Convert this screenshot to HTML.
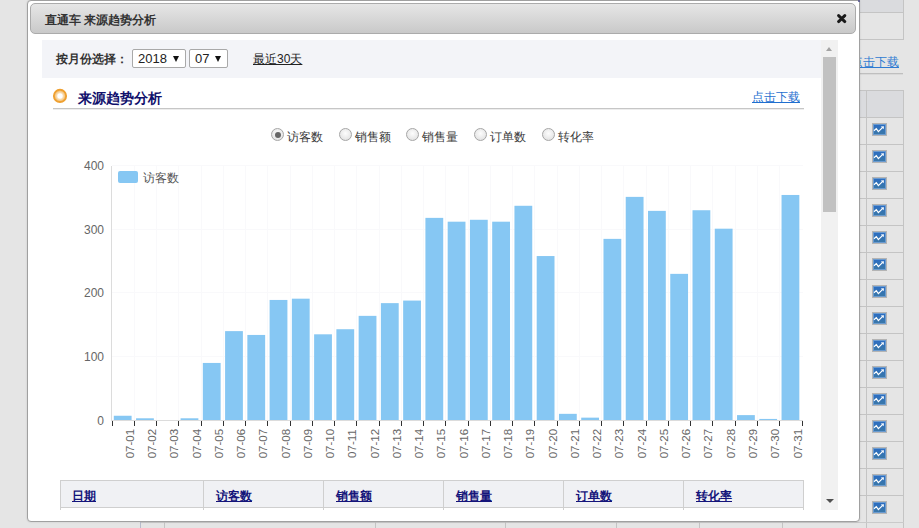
<!DOCTYPE html>
<html><head><meta charset="utf-8"><style>
*{box-sizing:border-box}
html,body{margin:0;padding:0}
body{width:919px;height:528px;overflow:hidden;position:relative;background:#e5e5e5;font-family:"Liberation Sans",sans-serif;font-size:12px;color:#333}
.a{position:absolute}
.hl{position:absolute;height:1px;background:#c4c4c4}
.vl{position:absolute;width:1px;background:#c4c4c4}
.ico{position:absolute;left:872px;width:15px;height:13px;border:1px solid #b4b4b4;box-shadow:inset 0 0 0 1px #6b9bd0;background:linear-gradient(#2a6cc4,#3c79a6)}
.ico svg{display:block}
#dlg{position:absolute;left:27px;top:0;width:833px;height:522px;background:#fff;border:1px solid #a0a0a0;border-radius:4px 1px 4px 4px;box-shadow:0 0 2px rgba(0,0,0,.15)}
#hdr{position:absolute;left:2px;top:2px;width:826px;height:31px;border:1px solid #ababab;border-radius:5px;background:linear-gradient(#e6e6e6,#c9c9c9)}
#hdr .t{position:absolute;left:14px;top:8px;font-weight:bold;font-size:12px;color:#333;line-height:16px}
.sel{position:absolute;top:49px;height:19px;border:1px solid #a9a9a9;border-radius:2px;background:#fff;font-size:13px;color:#222;line-height:17px;padding-left:5px}
.tri{position:absolute;width:0;height:0;border-left:3.5px solid transparent;border-right:3.5px solid transparent;border-top:6px solid #111}
.rad{position:absolute;top:128px;width:13px;height:13px;border-radius:50%;border:1px solid #a6a6a6;background:radial-gradient(circle at 50% 40%,#fdfdfd,#dcdcdc)}
.rl{position:absolute;top:129px;font-size:12px;color:#3a3a3a;line-height:16px}
.th{position:absolute;top:488px;font-weight:bold;color:#14147a;text-decoration:underline;font-size:12px;line-height:16px}
</style></head><body>
<!-- background page -->
<div class="a" style="left:859px;top:0;width:44px;height:12px;background:#dadbde"></div>
<div class="hl" style="top:12px;left:859px;width:45px"></div>
<div class="hl" style="top:39px;left:859px;width:45px"></div>
<div class="vl" style="top:0;left:903px;height:40px"></div>
<div class="a" style="left:851px;top:54px;color:#2f7bd2;text-decoration:underline;font-size:12px;line-height:16px">点击下载</div>
<div class="hl" style="top:73px;left:859px;width:44px;background:#bfbfbf"></div><div class="hl" style="top:74px;left:859px;width:44px;background:#d9d9d9"></div>
<div class="a" style="left:859px;top:90px;width:44px;height:27px;background:#dadbde"></div>
<div class="hl" style="top:90px;left:859px;width:45px"></div>
<div class="hl" style="top:117px;left:859px;width:45px"></div><div class="hl" style="top:144px;left:859px;width:45px"></div><div class="hl" style="top:171px;left:859px;width:45px"></div><div class="hl" style="top:198px;left:859px;width:45px"></div><div class="hl" style="top:225px;left:859px;width:45px"></div><div class="hl" style="top:252px;left:859px;width:45px"></div><div class="hl" style="top:279px;left:859px;width:45px"></div><div class="hl" style="top:306px;left:859px;width:45px"></div><div class="hl" style="top:333px;left:859px;width:45px"></div><div class="hl" style="top:360px;left:859px;width:45px"></div><div class="hl" style="top:387px;left:859px;width:45px"></div><div class="hl" style="top:414px;left:859px;width:45px"></div><div class="hl" style="top:441px;left:859px;width:45px"></div><div class="hl" style="top:468px;left:859px;width:45px"></div><div class="hl" style="top:495px;left:859px;width:45px"></div><div class="hl" style="top:522px;left:859px;width:45px"></div>
<div class="vl" style="top:90px;left:866px;height:438px"></div>
<div class="vl" style="top:90px;left:903px;height:438px"></div>
<div class="ico" style="top:123px"><svg width="13" height="11" viewBox="0 0 13 11"><path d="M1 6.7 L3.3 4.6 L5.4 7.6 L9.4 3.6" stroke="#fff" stroke-width="1.2" fill="none"/><path d="M7.8 2.4 L10.9 2.2 L10.7 5.3 Z" fill="#fff"/></svg></div><div class="ico" style="top:150px"><svg width="13" height="11" viewBox="0 0 13 11"><path d="M1 6.7 L3.3 4.6 L5.4 7.6 L9.4 3.6" stroke="#fff" stroke-width="1.2" fill="none"/><path d="M7.8 2.4 L10.9 2.2 L10.7 5.3 Z" fill="#fff"/></svg></div><div class="ico" style="top:177px"><svg width="13" height="11" viewBox="0 0 13 11"><path d="M1 6.7 L3.3 4.6 L5.4 7.6 L9.4 3.6" stroke="#fff" stroke-width="1.2" fill="none"/><path d="M7.8 2.4 L10.9 2.2 L10.7 5.3 Z" fill="#fff"/></svg></div><div class="ico" style="top:204px"><svg width="13" height="11" viewBox="0 0 13 11"><path d="M1 6.7 L3.3 4.6 L5.4 7.6 L9.4 3.6" stroke="#fff" stroke-width="1.2" fill="none"/><path d="M7.8 2.4 L10.9 2.2 L10.7 5.3 Z" fill="#fff"/></svg></div><div class="ico" style="top:231px"><svg width="13" height="11" viewBox="0 0 13 11"><path d="M1 6.7 L3.3 4.6 L5.4 7.6 L9.4 3.6" stroke="#fff" stroke-width="1.2" fill="none"/><path d="M7.8 2.4 L10.9 2.2 L10.7 5.3 Z" fill="#fff"/></svg></div><div class="ico" style="top:258px"><svg width="13" height="11" viewBox="0 0 13 11"><path d="M1 6.7 L3.3 4.6 L5.4 7.6 L9.4 3.6" stroke="#fff" stroke-width="1.2" fill="none"/><path d="M7.8 2.4 L10.9 2.2 L10.7 5.3 Z" fill="#fff"/></svg></div><div class="ico" style="top:285px"><svg width="13" height="11" viewBox="0 0 13 11"><path d="M1 6.7 L3.3 4.6 L5.4 7.6 L9.4 3.6" stroke="#fff" stroke-width="1.2" fill="none"/><path d="M7.8 2.4 L10.9 2.2 L10.7 5.3 Z" fill="#fff"/></svg></div><div class="ico" style="top:312px"><svg width="13" height="11" viewBox="0 0 13 11"><path d="M1 6.7 L3.3 4.6 L5.4 7.6 L9.4 3.6" stroke="#fff" stroke-width="1.2" fill="none"/><path d="M7.8 2.4 L10.9 2.2 L10.7 5.3 Z" fill="#fff"/></svg></div><div class="ico" style="top:339px"><svg width="13" height="11" viewBox="0 0 13 11"><path d="M1 6.7 L3.3 4.6 L5.4 7.6 L9.4 3.6" stroke="#fff" stroke-width="1.2" fill="none"/><path d="M7.8 2.4 L10.9 2.2 L10.7 5.3 Z" fill="#fff"/></svg></div><div class="ico" style="top:366px"><svg width="13" height="11" viewBox="0 0 13 11"><path d="M1 6.7 L3.3 4.6 L5.4 7.6 L9.4 3.6" stroke="#fff" stroke-width="1.2" fill="none"/><path d="M7.8 2.4 L10.9 2.2 L10.7 5.3 Z" fill="#fff"/></svg></div><div class="ico" style="top:393px"><svg width="13" height="11" viewBox="0 0 13 11"><path d="M1 6.7 L3.3 4.6 L5.4 7.6 L9.4 3.6" stroke="#fff" stroke-width="1.2" fill="none"/><path d="M7.8 2.4 L10.9 2.2 L10.7 5.3 Z" fill="#fff"/></svg></div><div class="ico" style="top:420px"><svg width="13" height="11" viewBox="0 0 13 11"><path d="M1 6.7 L3.3 4.6 L5.4 7.6 L9.4 3.6" stroke="#fff" stroke-width="1.2" fill="none"/><path d="M7.8 2.4 L10.9 2.2 L10.7 5.3 Z" fill="#fff"/></svg></div><div class="ico" style="top:447px"><svg width="13" height="11" viewBox="0 0 13 11"><path d="M1 6.7 L3.3 4.6 L5.4 7.6 L9.4 3.6" stroke="#fff" stroke-width="1.2" fill="none"/><path d="M7.8 2.4 L10.9 2.2 L10.7 5.3 Z" fill="#fff"/></svg></div><div class="ico" style="top:474px"><svg width="13" height="11" viewBox="0 0 13 11"><path d="M1 6.7 L3.3 4.6 L5.4 7.6 L9.4 3.6" stroke="#fff" stroke-width="1.2" fill="none"/><path d="M7.8 2.4 L10.9 2.2 L10.7 5.3 Z" fill="#fff"/></svg></div><div class="ico" style="top:501px"><svg width="13" height="11" viewBox="0 0 13 11"><path d="M1 6.7 L3.3 4.6 L5.4 7.6 L9.4 3.6" stroke="#fff" stroke-width="1.2" fill="none"/><path d="M7.8 2.4 L10.9 2.2 L10.7 5.3 Z" fill="#fff"/></svg></div>
<div class="hl" style="top:522px;left:140px;width:764px;background:#cacaca"></div>
<div class="vl" style="top:522px;left:140px;height:6px;background:#b8bccb"></div>
<div class="vl" style="top:522px;left:164px;height:6px"></div>
<div class="vl" style="top:522px;left:375px;height:6px"></div>
<div class="vl" style="top:522px;left:505px;height:6px"></div>
<div class="vl" style="top:522px;left:616px;height:6px"></div>
<div class="vl" style="top:522px;left:699px;height:6px"></div>
<div class="vl" style="top:522px;left:782px;height:6px"></div>

<div id="dlg">
 <div class="a" style="left:830px;top:-1px;width:2px;height:2px;background:#4b4b8c;border-radius:1px"></div>
 <div id="hdr"><div class="t">直通车 来源趋势分析</div>
  <svg class="a" style="left:806px;top:10px" width="12" height="12" viewBox="0 0 12 12"><path d="M1.6 1.6 L7.8 7.6 M7.8 1.6 L1.6 7.6" stroke="#1a1a1a" stroke-width="2.9" stroke-linecap="round"/></svg>
 </div>
</div>

<!-- scroll content -->
<div class="a" style="left:42px;top:40px;width:779px;height:38px;background:#f3f4f8"></div>
<div class="a" style="left:56px;top:51px;font-weight:bold;color:#333;line-height:16px">按月份选择：</div>
<div class="sel" style="left:132px;width:54px">2018<div class="tri" style="left:40px;top:6px"></div></div>
<div class="sel" style="left:189px;width:39px">07<div class="tri" style="left:25px;top:6px"></div></div>
<div class="a" style="left:253px;top:51px;color:#222;text-decoration:underline;line-height:16px">最近30天</div>

<svg class="a" style="left:52px;top:88px" width="16" height="16" viewBox="0 0 16 16"><defs><radialGradient id="og" cx="8" cy="8" r="5.4" gradientUnits="userSpaceOnUse"><stop offset="0" stop-color="#fff"/><stop offset="0.4" stop-color="#fff"/><stop offset="0.62" stop-color="#f8dcb2"/><stop offset="1" stop-color="#f3bf72"/></radialGradient></defs><circle cx="8" cy="7.9" r="5.4" fill="url(#og)"/><circle cx="8" cy="7.9" r="6.1" fill="none" stroke="#efa030" stroke-width="1.9"/></svg>
<div class="a" style="left:78px;top:89px;font-weight:bold;font-size:14px;color:#10106c;line-height:18px">来源趋势分析</div>
<div class="a" style="left:752px;top:89px;color:#1f6fcf;text-decoration:underline;line-height:16px">点击下载</div>
<div class="hl" style="top:108px;left:53px;width:751px;background:#c6c6c6"></div>
<div class="hl" style="top:109px;left:53px;width:751px;background:#ededed"></div>

<div class="rad" style="left:271px"><div style="position:absolute;left:2.5px;top:2.5px;width:6px;height:6px;border-radius:50%;background:#666"></div></div><div class="rl" style="left:287px">访客数</div>
<div class="rad" style="left:339px"></div><div class="rl" style="left:355px">销售额</div>
<div class="rad" style="left:406px"></div><div class="rl" style="left:422px">销售量</div>
<div class="rad" style="left:474px"></div><div class="rl" style="left:490px">订单数</div>
<div class="rad" style="left:542px"></div><div class="rl" style="left:558px">转化率</div>

<svg class="a" style="left:0;top:0" width="919" height="528" font-family="'Liberation Sans', sans-serif">
<g fill="#666" font-size="12" text-anchor="end">
<text x="104" y="170">400</text><text x="104" y="233.7">300</text><text x="104" y="297.3">200</text><text x="104" y="361">100</text><text x="104" y="424.5">0</text>
</g>
<g fill="#f9f9fb">
<rect x="134" y="166" width="1" height="254"/>
<rect x="156" y="166" width="1" height="254"/>
<rect x="178" y="166" width="1" height="254"/>
<rect x="201" y="166" width="1" height="254"/>
<rect x="223" y="166" width="1" height="254"/>
<rect x="245" y="166" width="1" height="254"/>
<rect x="267" y="166" width="1" height="254"/>
<rect x="290" y="166" width="1" height="254"/>
<rect x="312" y="166" width="1" height="254"/>
<rect x="334" y="166" width="1" height="254"/>
<rect x="356" y="166" width="1" height="254"/>
<rect x="379" y="166" width="1" height="254"/>
<rect x="401" y="166" width="1" height="254"/>
<rect x="423" y="166" width="1" height="254"/>
<rect x="445" y="166" width="1" height="254"/>
<rect x="468" y="166" width="1" height="254"/>
<rect x="490" y="166" width="1" height="254"/>
<rect x="512" y="166" width="1" height="254"/>
<rect x="534" y="166" width="1" height="254"/>
<rect x="557" y="166" width="1" height="254"/>
<rect x="579" y="166" width="1" height="254"/>
<rect x="601" y="166" width="1" height="254"/>
<rect x="623" y="166" width="1" height="254"/>
<rect x="646" y="166" width="1" height="254"/>
<rect x="668" y="166" width="1" height="254"/>
<rect x="690" y="166" width="1" height="254"/>
<rect x="712" y="166" width="1" height="254"/>
<rect x="735" y="166" width="1" height="254"/>
<rect x="757" y="166" width="1" height="254"/>
<rect x="779" y="166" width="1" height="254"/>
<rect x="112" y="356" width="691" height="1"/><rect x="112" y="292" width="691" height="1"/><rect x="112" y="229" width="691" height="1"/><rect x="112" y="165" width="691" height="1"/>
</g>
<g fill="#86c7f3">
<rect x="113.80" y="415.75" width="17.8" height="4.45"/>
<rect x="136.06" y="418.29" width="17.8" height="1.91"/>
<rect x="180.57" y="418.29" width="17.8" height="1.91"/>
<rect x="202.83" y="362.94" width="17.8" height="57.26"/>
<rect x="225.09" y="331.12" width="17.8" height="89.08"/>
<rect x="247.35" y="334.94" width="17.8" height="85.26"/>
<rect x="269.61" y="299.95" width="17.8" height="120.25"/>
<rect x="291.86" y="298.68" width="17.8" height="121.52"/>
<rect x="314.12" y="334.31" width="17.8" height="85.89"/>
<rect x="336.38" y="329.22" width="17.8" height="90.98"/>
<rect x="358.64" y="315.86" width="17.8" height="104.34"/>
<rect x="380.90" y="303.13" width="17.8" height="117.07"/>
<rect x="403.15" y="300.58" width="17.8" height="119.61"/>
<rect x="425.41" y="217.87" width="17.8" height="202.33"/>
<rect x="447.67" y="221.69" width="17.8" height="198.51"/>
<rect x="469.93" y="219.78" width="17.8" height="200.42"/>
<rect x="492.19" y="221.69" width="17.8" height="198.51"/>
<rect x="514.45" y="205.78" width="17.8" height="214.42"/>
<rect x="536.70" y="256.05" width="17.8" height="164.15"/>
<rect x="558.96" y="413.84" width="17.8" height="6.36"/>
<rect x="581.22" y="417.65" width="17.8" height="2.54"/>
<rect x="603.48" y="238.87" width="17.8" height="181.33"/>
<rect x="625.74" y="196.88" width="17.8" height="223.32"/>
<rect x="647.99" y="210.87" width="17.8" height="209.33"/>
<rect x="670.25" y="273.86" width="17.8" height="146.34"/>
<rect x="692.51" y="210.24" width="17.8" height="209.96"/>
<rect x="714.77" y="228.69" width="17.8" height="191.51"/>
<rect x="737.03" y="415.11" width="17.8" height="5.09"/>
<rect x="759.28" y="418.93" width="17.8" height="1.27"/>
<rect x="781.54" y="194.97" width="17.8" height="225.23"/>
</g>
<rect x="111" y="166" width="1" height="255" fill="#dcdcdc"/><rect x="111" y="420" width="692" height="1" fill="#dcdcdc"/>
<g fill="#333">
<rect x="112" y="421" width="1" height="5"/>
<rect x="134" y="421" width="1" height="5"/>
<rect x="156" y="421" width="1" height="5"/>
<rect x="178" y="421" width="1" height="5"/>
<rect x="201" y="421" width="1" height="5"/>
<rect x="223" y="421" width="1" height="5"/>
<rect x="245" y="421" width="1" height="5"/>
<rect x="267" y="421" width="1" height="5"/>
<rect x="290" y="421" width="1" height="5"/>
<rect x="312" y="421" width="1" height="5"/>
<rect x="334" y="421" width="1" height="5"/>
<rect x="356" y="421" width="1" height="5"/>
<rect x="379" y="421" width="1" height="5"/>
<rect x="401" y="421" width="1" height="5"/>
<rect x="423" y="421" width="1" height="5"/>
<rect x="445" y="421" width="1" height="5"/>
<rect x="468" y="421" width="1" height="5"/>
<rect x="490" y="421" width="1" height="5"/>
<rect x="512" y="421" width="1" height="5"/>
<rect x="534" y="421" width="1" height="5"/>
<rect x="557" y="421" width="1" height="5"/>
<rect x="579" y="421" width="1" height="5"/>
<rect x="601" y="421" width="1" height="5"/>
<rect x="623" y="421" width="1" height="5"/>
<rect x="646" y="421" width="1" height="5"/>
<rect x="668" y="421" width="1" height="5"/>
<rect x="690" y="421" width="1" height="5"/>
<rect x="712" y="421" width="1" height="5"/>
<rect x="735" y="421" width="1" height="5"/>
<rect x="757" y="421" width="1" height="5"/>
<rect x="779" y="421" width="1" height="5"/>
<rect x="802" y="421" width="1" height="5"/>
</g>
<g fill="#666" font-size="11.5" text-anchor="middle">
<text transform="translate(133.76,443.6) rotate(-90)">07-01</text>
<text transform="translate(156.02,443.6) rotate(-90)">07-02</text>
<text transform="translate(178.27,443.6) rotate(-90)">07-03</text>
<text transform="translate(200.53,443.6) rotate(-90)">07-04</text>
<text transform="translate(222.79,443.6) rotate(-90)">07-05</text>
<text transform="translate(245.05,443.6) rotate(-90)">07-06</text>
<text transform="translate(267.31,443.6) rotate(-90)">07-07</text>
<text transform="translate(289.56,443.6) rotate(-90)">07-08</text>
<text transform="translate(311.82,443.6) rotate(-90)">07-09</text>
<text transform="translate(334.08,443.6) rotate(-90)">07-10</text>
<text transform="translate(356.34,443.6) rotate(-90)">07-11</text>
<text transform="translate(378.60,443.6) rotate(-90)">07-12</text>
<text transform="translate(400.85,443.6) rotate(-90)">07-13</text>
<text transform="translate(423.11,443.6) rotate(-90)">07-14</text>
<text transform="translate(445.37,443.6) rotate(-90)">07-15</text>
<text transform="translate(467.63,443.6) rotate(-90)">07-16</text>
<text transform="translate(489.89,443.6) rotate(-90)">07-17</text>
<text transform="translate(512.15,443.6) rotate(-90)">07-18</text>
<text transform="translate(534.40,443.6) rotate(-90)">07-19</text>
<text transform="translate(556.66,443.6) rotate(-90)">07-20</text>
<text transform="translate(578.92,443.6) rotate(-90)">07-21</text>
<text transform="translate(601.18,443.6) rotate(-90)">07-22</text>
<text transform="translate(623.44,443.6) rotate(-90)">07-23</text>
<text transform="translate(645.69,443.6) rotate(-90)">07-24</text>
<text transform="translate(667.95,443.6) rotate(-90)">07-25</text>
<text transform="translate(690.21,443.6) rotate(-90)">07-26</text>
<text transform="translate(712.47,443.6) rotate(-90)">07-27</text>
<text transform="translate(734.73,443.6) rotate(-90)">07-28</text>
<text transform="translate(756.98,443.6) rotate(-90)">07-29</text>
<text transform="translate(779.24,443.6) rotate(-90)">07-30</text>
<text transform="translate(801.50,443.6) rotate(-90)">07-31</text>
</g>
<rect x="118" y="171" width="20" height="12" rx="2" fill="#86c7f3"/>
<text x="143" y="181.5" font-size="12" fill="#555">访客数</text>
</svg>

<div class="a" style="left:60px;top:480px;width:744px;height:30px;border:1px solid #cfcfcf;border-bottom:none;background:linear-gradient(#f0f1f4 0,#f0f1f4 26px,#fff 26px)"></div>
<div class="hl" style="top:507px;left:60px;width:744px;background:#cfcfcf"></div>
<div class="vl" style="top:480px;left:203px;height:30px;background:#cfcfcf"></div>
<div class="vl" style="top:480px;left:323px;height:30px;background:#cfcfcf"></div>
<div class="vl" style="top:480px;left:443px;height:30px;background:#cfcfcf"></div>
<div class="vl" style="top:480px;left:563px;height:30px;background:#cfcfcf"></div>
<div class="vl" style="top:480px;left:683px;height:30px;background:#cfcfcf"></div>
<div class="th" style="left:72px">日期</div>
<div class="th" style="left:216px">访客数</div>
<div class="th" style="left:336px">销售额</div>
<div class="th" style="left:456px">销售量</div>
<div class="th" style="left:576px">订单数</div>
<div class="th" style="left:696px">转化率</div>

<!-- scrollbar -->
<div class="a" style="left:821px;top:40px;width:17px;height:470px;background:#f1f1f1"></div>
<div class="a" style="left:823px;top:57px;width:13px;height:155px;background:#c1c1c1"></div>
<div class="a" style="left:826px;top:47px;width:0;height:0;border-left:3.5px solid transparent;border-right:3.5px solid transparent;border-bottom:4px solid #a3a3a3"></div>
<div class="a" style="left:825.5px;top:499px;width:0;height:0;border-left:4px solid transparent;border-right:4px solid transparent;border-top:4.5px solid #505050"></div>
</body></html>
